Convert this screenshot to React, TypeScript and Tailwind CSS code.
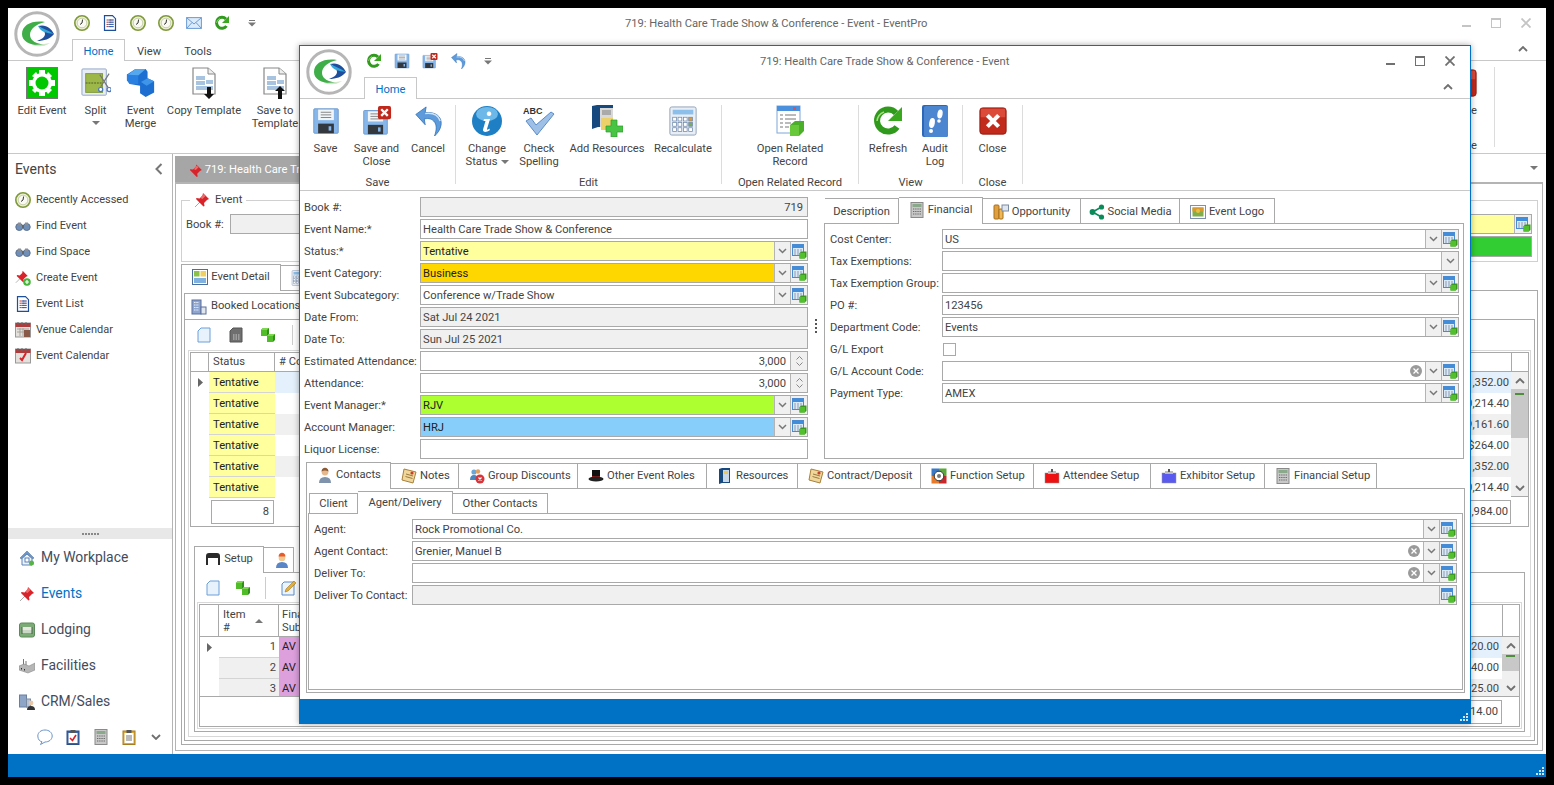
import type { ReactNode } from 'react'

type P = { s?: number }

function Logo({ s = 46 }: P) {
  return (
    <svg width={s} height={s} viewBox="0 0 46 46">
      <circle cx="23" cy="23" r="21.200" fill="#fff" stroke="#b6b6b6" strokeWidth="3" />
      <path d="M31 11C18 9 8 14 8 23c0 8 10 13 24 11-9-1-16-4-16-10 0-6 6-11 15-13z" fill="#3fae49" />
      <path d="M18 34c6 2 12 2 18-2-6 1-12 2-18 2z" fill="#cfe6c8" />
      <path d="M24 15c8-2 13 2 16 8-4 5-10 7-17 7 5-2 8-4 8-7 0-3-3-6-7-8z" fill="#1f4e9c" />
      <path d="M24 15c4 2 9 4 16 8-8-1-13-2-16-8z" fill="#35a6d8" />
    </svg>
  )
}
function Clock({ s = 16 }: P) {
  return (
    <svg width={s} height={s} viewBox="0 0 16 16">
      <circle cx="8" cy="8" r="7.200" fill="#eef0d8" stroke="#7f9a3a" strokeWidth="1.600" />
      <circle cx="8" cy="8" r="4.800" fill="#fafaf2" stroke="#9aa870" strokeWidth=".5" />
      <path d="M8.600 4.500 8 8 6 9.500" fill="none" stroke="#333" strokeWidth="1" />
    </svg>
  )
}
function DocList({ s = 16 }: P) {
  return (
    <svg width={s} height={s} viewBox="0 0 16 16">
      <path d="M2.500.7h8l3 3v11.600h-11z" fill="#fff" stroke="#1d4f9c" strokeWidth="1.200" />
      <path d="M4.500 5h7M4.500 7.200h7M4.500 9.400h7M4.500 11.600h7" stroke="#c0392b" strokeWidth="1" strokeDasharray="2 1" />
      <path d="M6.500 5h5M6.500 7.200h5M6.500 9.400h5M6.500 11.600h5" stroke="#2a62b8" strokeWidth="1" />
    </svg>
  )
}
function Mail({ s = 16 }: P) {
  return (
    <svg width={s} height={s} viewBox="0 0 16 16">
      <rect x=".6" y="2.600" width="14.800" height="10.800" fill="#dcebfa" stroke="#6a9bd6" />
      <path d="M1 3l7 6 7-6M1 13l5-5.500M15 13l-5-5.500" fill="none" stroke="#6a9bd6" />
    </svg>
  )
}
function Refresh({ s = 16 }: P) {
  return (
    <svg width={s} height={s} viewBox="0 0 32 32">
      <path d="M25 22a11 11 0 1 1-1-14" fill="none" stroke="#2f9a1c" strokeWidth="6" />
      <path d="M30 2v14H16z" fill="#3aa81f" />
      <path d="M12 7a11 11 0 0 0-7 9" fill="none" stroke="#a6de7c" strokeWidth="1.500" />
    </svg>
  )
}
function FloppyBody({ gray }: { gray?: boolean }) {
  return (
    <>
      <path d="M2 3q0-1 1-1h26q1 0 1 1v26q0 1-1 1H3q-1 0-1-1z" fill={gray ? '#c8c8c8' : '#86b6ea'} stroke={gray ? '#9a9a9a' : '#6a96cc'} />
      <rect x="7" y="3" width="18" height="12" fill="#f2f5f8" />
      <path d="M10 6h12M10 9h12M10 12h12" stroke="#777" />
      <rect x="7" y="19" width="18" height="11" fill={gray ? '#8c8c8c' : '#33383f'} />
      <rect x="19" y="22" width="3" height="5" fill={gray ? '#ddd' : '#86b6ea'} />
    </>
  )
}
function Floppy({ s = 16, gray }: P & { gray?: boolean }) {
  return <svg width={s} height={s} viewBox="0 0 32 32"><FloppyBody gray={gray} /></svg>
}
function FloppyX({ s = 16 }: P) {
  return (
    <svg width={s} height={s} viewBox="0 0 32 32">
      <g transform="translate(0 3) scale(.9)"><FloppyBody /></g>
      <rect x="17" y="0" width="14" height="14" rx="2" fill="#c0281b" />
      <path d="M20.500 3.500l7 7M27.500 3.500l-7 7" stroke="#fff" strokeWidth="2.500" />
    </svg>
  )
}
function Undo({ s = 16 }: P) {
  return (
    <svg width={s} height={s} viewBox="0 0 32 32">
      <path d="M3 9 14 1l-1 6C24 6 31 11 30 20c-1 6-4 9-7 12 2-6 3-12-1-16-3-3-7-3-10-2l1 6z" fill="#5d9bdc" stroke="#2b6cb3" strokeWidth=".8" />
      <path d="M13 8c8-1 14 2 16 8" fill="none" stroke="#cfe2f6" strokeWidth="1.500" />
    </svg>
  )
}
function Info({ s = 32 }: P) {
  return (
    <svg width={s} height={s} viewBox="0 0 32 32">
      <circle cx="16" cy="16" r="15" fill="#1e7fc4" />
      <ellipse cx="16" cy="9" rx="11" ry="7" fill="#6cb8e8" />
      <path d="M18 6.500a2.300 2.300 0 1 0 .1 0zM13 14h6l-3 10c0 1 1 1 3-.5l-.5 2c-3 2-7 2-6.500-1l2.500-8.500h-2z" fill="#fff" />
    </svg>
  )
}
function CheckAbc({ s = 32 }: P) {
  return (
    <svg width={s} height={s} viewBox="0 0 32 32">
      <text x="0" y="9" fontSize="9" fontWeight="700" fontFamily="Liberation Sans" fill="#333">ABC</text>
      <path d="M3 16l5-3 5 7L28 7l3 2-17 21z" fill="#9ec0e6" stroke="#5a8cc8" />
    </svg>
  )
}
function Cabinet({ s = 32 }: P) {
  return (
    <svg width={s} height={s} viewBox="0 0 32 32">
      <path d="M1 1l5-1h16v22H7l-6 2z" fill="#17497f" />
      <rect x="9" y="3" width="13" height="19" fill="#d8d8d8" />
      <rect x="11" y="5" width="9" height="5" fill="#aaa" />
      <path d="M10 13h12v12H10z" fill="#ecd06a" />
      <path d="M20 15h6v6h6v6h-6v5h-6v-5h-5v-6h5z" fill="#48c444" stroke="#2d9b2d" strokeWidth=".7" />
    </svg>
  )
}
function Calc({ s = 32 }: P) {
  return (
    <svg width={s} height={s} viewBox="0 0 32 32">
      <rect x="2" y="1" width="28" height="30" rx="2" fill="#e8eef6" stroke="#8f9fb5" />
      <rect x="5" y="4" width="22" height="5" fill="#8cc0ea" />
      {[0, 1, 2, 3].map(c => [0, 1, 2].map(r => (
        <rect key={`${c}${r}`} x={5 + c * 5.7} y={12 + r * 5.6} width="4" height="4" fill={c === 3 && r === 0 ? '#e09a38' : c === 3 && r === 1 ? '#78b050' : '#fff'} stroke="#6f88ac" strokeWidth=".8" />
      )))}
    </svg>
  )
}
function GrayCalc({ s = 16 }: P) {
  return (
    <svg width={s} height={s} viewBox="0 0 16 16">
      <rect x="2" y=".5" width="12" height="15" fill="#c8c8c8" stroke="#8a8a8a" />
      <rect x="3.500" y="2" width="9" height="3" fill="#8aa88a" />
      <path d="M4 7h8M4 9.500h8M4 12h8" stroke="#666" strokeWidth="1.200" strokeDasharray="1.300 .9" />
    </svg>
  )
}
function Related({ s = 32 }: P) {
  return (
    <svg width={s} height={s} viewBox="0 0 32 32">
      <rect x="3" y="1" width="23" height="27" fill="#fff" stroke="#7fa8d8" />
      <rect x="3" y="1" width="23" height="5" fill="#4a90dc" />
      <rect x="19" y="2" width="3" height="3" fill="#e05050" />
      <path d="M6 10h3M11 10h11M6 14h3M11 14h11M6 18h3M11 18h6M6 22h3M11 22h4" stroke="#777" />
      <path d="M16 20l5-4h9v10l-5 5h-9z" fill="#4caf2a" />
      <path d="M16 20h9v11h-9z" fill="#67c83a" />
    </svg>
  )
}
function AddBtn() {
  return (
    <svg width="15" height="15" viewBox="0 0 15 15">
      <rect x=".5" y=".5" width="11" height="11" fill="#dbe8f6" stroke="#4a8ad0" />
      <rect x="1" y="1" width="10" height="3" fill="#3f8ede" />
      <path d="M2 6h8M2 8h8M2 10h8" stroke="#8a9ab0" strokeDasharray="2 1" />
      <path d="M7.500 9l2-1.500H14.500V13l-2 1.500H7.500z" fill="#3a9a1e" />
      <rect x="7.500" y="9" width="5.500" height="5.500" fill="#52c02c" />
    </svg>
  )
}
function DetailIco({ s = 16 }: P) {
  return (
    <svg width={s} height={s} viewBox="0 0 16 16">
      <rect x=".5" y=".5" width="15" height="15" fill="#fff" stroke="#4a6f9c" />
      <rect x="2" y="2" width="5.500" height="5.500" fill="#8ac24a" />
      <rect x="8.500" y="2" width="5.500" height="5.500" fill="#f0d060" />
      <rect x="2" y="9" width="12" height="5" fill="#7fb2e0" />
    </svg>
  )
}
function Audit({ s = 32 }: P) {
  return (
    <svg width={s} height={s} viewBox="0 0 32 32">
      <rect x="3" y="0" width="26" height="32" rx="2" fill="#2d68b8" />
      <rect x="5" y="1" width="24" height="31" rx="2" fill="#4c86d0" />
      <ellipse cx="13" cy="18" rx="2.800" ry="5" fill="#fff" transform="rotate(10 13 18)" />
      <circle cx="12" cy="26" r="2" fill="#fff" />
      <ellipse cx="21" cy="9" rx="2.600" ry="4.500" fill="#fff" transform="rotate(10 21 9)" />
      <circle cx="20" cy="16" r="1.800" fill="#fff" />
    </svg>
  )
}
function RedX({ s = 32 }: P) {
  return (
    <svg width={s} height={s} viewBox="0 0 32 32">
      <rect x="2" y="2" width="28" height="28" rx="3" fill="#c22a1c" stroke="#8e1a10" />
      <path d="M3 4q0-1 1-1h24q1 0 1 1v8H3z" fill="#dc4a3a" />
      <path d="M10 10l12 12M22 10 10 22" stroke="#fff" strokeWidth="4.500" />
    </svg>
  )
}
function GearGreen({ s = 32 }: P) {
  return (
    <svg width={s} height={s} viewBox="0 0 32 32">
      <rect x=".5" y=".5" width="31" height="31" fill="#00c800" stroke="#777" />
      <circle cx="16" cy="16" r="10" fill="#fff" />
      <path d="M13 3h6v5h-6zM13 24h6v5h-6zM3 13h5v6H3zM24 13h5v6h-5zM6 9l4-4 3 4-3 3zM22 5l4 4-3 3-3-3zM6 23l3-3 3 3-3 3zM23 20l3 3-4 4-3-4z" fill="#fff" />
      <circle cx="16" cy="16" r="6.500" fill="#00c800" />
    </svg>
  )
}
function Split({ s = 32 }: P) {
  return (
    <svg width={s} height={s} viewBox="0 0 32 32">
      <rect x="1" y="1" width="26" height="28" rx="1" fill="#e8edf5" stroke="#8da3c4" />
      <rect x="5" y="6" width="18" height="20" fill="#9db849" stroke="#7f9a35" />
      <path d="M5 16h18" stroke="#4c5a20" strokeDasharray="2 1" />
      <path d="M20 7l9 14M30 6l-9 14" stroke="#777" strokeWidth="1.300" />
      <circle cx="30" cy="23" r="2.200" fill="#fff" stroke="#4a78c0" strokeWidth="1.300" />
      <circle cx="21" cy="23" r="2.200" fill="#fff" stroke="#4a78c0" strokeWidth="1.300" />
    </svg>
  )
}
function Merge({ s = 32 }: P) {
  return (
    <svg width={s} height={s} viewBox="0 0 32 32">
      <path d="M10 1h11l2 3v7l7 3v12l-9 5-6-4v-8L4 17l-3-4V7z" fill="#1c6fd0" />
      <path d="M10 1h11l-8 7H1z" fill="#55a8ee" />
      <path d="M13 8v9l-9 0-3-4V7z" fill="#2a80e0" />
      <path d="M23 11l7 3-8 5-6-4z" fill="#3f95e8" />
    </svg>
  )
}
function Template({ s = 32, up }: P & { up?: boolean }) {
  return (
    <svg width={s} height={s} viewBox="0 0 32 32">
      <path d="M5 1h15l7 6v20H5z" fill="#fff" stroke="#888" strokeWidth="1.200" />
      <path d="M20 1v6h7" fill="#eee" stroke="#888" />
      <path d="M8 9h9v4H8zM18 13h7v4h-7zM8 14h9v4H8zM8 19h17v4H8z" fill="#a8c3e0" />
      {up ? <path d="M19 32v-8h-3l5-5 5 5h-3v8z" fill="#111" /> : <path d="M19 20v7h-3l5 5 5-5h-3v-7z" fill="#111" />}
    </svg>
  )
}
function Pin({ s = 16 }: P) {
  return (
    <svg width={s} height={s} viewBox="0 0 16 16">
      <path d="M1 15l5-5" stroke="#aaa" strokeWidth="1" />
      <path d="M9 1l6 6-2 1-3 3 .5 3-1 .5-7.500-7.500.5-1 3 .5 3-3z" fill="#d8232a" />
      <path d="M9.500 2l2 2-3 3-2-1z" fill="#ef6a6a" />
    </svg>
  )
}
function PinAdd({ s = 16 }: P) {
  return (
    <svg width={s} height={s} viewBox="0 0 16 16">
      <g transform="scale(.85)"><path d="M1 15l5-5" stroke="#aaa" /><path d="M9 1l6 6-2 1-3 3 .5 3-1 .5-7.500-7.500.5-1 3 .5 3-3z" fill="#d8232a" /></g>
      <circle cx="12" cy="12" r="3.800" fill="#46b63a" />
      <path d="M12 10v4M10 12h4" stroke="#fff" strokeWidth="1.200" />
    </svg>
  )
}
function Binoc({ s = 16 }: P) {
  return (
    <svg width={s} height={s} viewBox="0 0 16 16">
      <circle cx="4.300" cy="9" r="3.500" fill="#6f8fb8" stroke="#5a6f8c" />
      <circle cx="11.700" cy="9" r="3.500" fill="#6f8fb8" stroke="#5a6f8c" />
      <rect x="3" y="4.500" width="3" height="3" fill="#8a8f98" />
      <rect x="10" y="4.500" width="3" height="3" fill="#8a8f98" />
      <rect x="7" y="7" width="2" height="3" fill="#666" />
    </svg>
  )
}
function Cal({ s = 16, check }: P & { check?: boolean }) {
  return (
    <svg width={s} height={s} viewBox="0 0 16 16">
      <rect x=".5" y="1" width="15" height="14" fill="#e4e0dc" stroke="#999" />
      <rect x=".5" y="1" width="15" height="4" fill="#b23a3a" />
      <path d="M3 0v3M7 0v3M11 0v3" stroke="#666" />
      {check ? <path d="M5 10l2 2 4-7" fill="none" stroke="#d8232a" strokeWidth="2" /> : <path d="M2 7h12M2 10h12M5 6v8M8 6v8" stroke="#a8a39c" />}
      {!check && <rect x="9" y="8" width="6" height="7" fill="#8a5a48" />}
    </svg>
  )
}
function House({ s = 16 }: P) {
  return (
    <svg width={s} height={s} viewBox="0 0 16 16">
      <path d="M1 8l7-7 7 7-1.500 1L8 3.500 2.500 9z" fill="#6f96c8" stroke="#40689c" strokeWidth=".5" />
      <path d="M3 8.500 8 4l5 4.500V15H3z" fill="#eef3fa" stroke="#5c84b8" />
      <rect x="6" y="8" width="4" height="4" fill="#fff" stroke="#5c84b8" />
      <circle cx="12.500" cy="13" r="2.500" fill="#57b345" />
    </svg>
  )
}
function Bed({ s = 16 }: P) {
  return (
    <svg width={s} height={s} viewBox="0 0 16 16">
      <rect x=".5" y="1" width="15" height="14" rx="2" fill="#7cab78" stroke="#5c8a58" />
      <rect x="3" y="5" width="10" height="3" fill="#e8e8e0" />
      <rect x="3" y="8" width="10" height="3" fill="#c8d8c4" />
      <path d="M3 5v7M13 5v7" stroke="#4a5f48" />
    </svg>
  )
}
function Factory({ s = 16 }: P) {
  return (
    <svg width={s} height={s} viewBox="0 0 16 16">
      <path d="M4 1h1v6H4zM6.500 3h1v4h-1z" fill="#777" />
      <path d="M0 8l5-2 5 2 6-3v7l-7 3-9-3z" fill="#b6b6b6" stroke="#7c7c7c" strokeWidth=".5" />
      <path d="M2 10h1v1.500H2zM5 11h1v1.500H5z" fill="#333" />
    </svg>
  )
}
function Crm({ s = 16 }: P) {
  return (
    <svg width={s} height={s} viewBox="0 0 16 16">
      <rect x=".5" y="1" width="7" height="12" fill="#8ea5c8" stroke="#6a7f9e" />
      <rect x="7.500" y="5" width="4" height="8" fill="#b4c2d8" stroke="#7a8aa0" />
      <circle cx="12" cy="9" r="2.400" fill="#e8c8a8" />
      <path d="M8 16q0-4 4-4t4 4z" fill="#333" />
    </svg>
  )
}
function Bubble({ s = 16 }: P) {
  return (
    <svg width={s} height={s} viewBox="0 0 16 16">
      <path d="M8 1C4 1 .8 3.500.8 7S3 12.500 5 12.800L3.500 15.500 8 13c4 0 7.200-2.500 7.200-6S12 1 8 1z" fill="#fff" stroke="#6a94c8" />
    </svg>
  )
}
function Clip({ s = 16, check }: P & { check?: boolean }) {
  return (
    <svg width={s} height={s} viewBox="0 0 16 16">
      <rect x="2" y="2" width="12" height="13.500" fill={check ? '#3a66a8' : '#d8a838'} stroke={check ? '#2a4f88' : '#a87c20'} />
      <rect x="3.500" y="4" width="9" height="10" fill="#fff" />
      <rect x="5.500" y="1" width="5" height="3" fill="#555" />
      {check ? <path d="M5 9l2.500 2.500L11 6" fill="none" stroke="#d8232a" strokeWidth="1.600" /> : <path d="M5 7h6M5 9h6M5 11h6" stroke="#777" />}
    </svg>
  )
}
function Share({ s = 16 }: P) {
  return (
    <svg width={s} height={s} viewBox="0 0 16 16">
      <path d="M12.500 3 3.500 8l9 5" fill="none" stroke="#0b8a5a" strokeWidth="1.600" />
      <circle cx="12.500" cy="3" r="2.600" fill="#0b8a5a" />
      <circle cx="3.500" cy="8" r="2.900" fill="#0b8a5a" />
      <circle cx="12.500" cy="13" r="2.600" fill="#0b8a5a" />
    </svg>
  )
}
function Photo({ s = 16 }: P) {
  return (
    <svg width={s} height={s} viewBox="0 0 16 16">
      <rect x=".5" y="1.500" width="15" height="13" fill="#fff" stroke="#7f8fb0" />
      <rect x="2.500" y="3.500" width="11" height="9" fill="#7fae4a" />
      <rect x="2.500" y="3.500" width="11" height="4" fill="#d89a30" />
      <circle cx="8" cy="7" r="2" fill="#e8c040" />
    </svg>
  )
}
function Coins({ s = 16 }: P) {
  return (
    <svg width={s} height={s} viewBox="0 0 16 16">
      <rect x="1" y="1" width="5" height="14" rx="1" fill="#e0a040" stroke="#a86f18" />
      <rect x="6" y="5" width="4" height="10" rx="1" fill="#eeb858" stroke="#a86f18" />
      <rect x="9" y="1" width="6.500" height="6" fill="#dfe6f0" stroke="#7a8aa0" />
    </svg>
  )
}
function Person({ s = 16 }: P) {
  return (
    <svg width={s} height={s} viewBox="0 0 16 16">
      <path d="M2 16q0-6 6-6t6 6z" fill="#7f93ad" />
      <circle cx="8" cy="5" r="3.400" fill="#e6b88e" />
      <path d="M4.500 4.500Q5 .8 8 .8t3.500 3.700Q8 2.500 4.500 4.500z" fill="#8b5a34" />
    </svg>
  )
}
function Worker({ s = 16 }: P) {
  return (
    <svg width={s} height={s} viewBox="0 0 16 16">
      <path d="M2 16q0-6 6-6t6 6z" fill="#5a86c8" />
      <circle cx="8" cy="6" r="3.300" fill="#f0c890" />
      <path d="M4.500 4.500Q5 .8 8 .8t3.500 3.700z" fill="#e85a2a" />
    </svg>
  )
}
function Notes({ s = 16 }: P) {
  return (
    <svg width={s} height={s} viewBox="0 0 16 16">
      <path d="M3 1l12 3-3 11-11-3z" fill="#efd69a" stroke="#a8803a" />
      <path d="M5 6l7 2M4.500 8.500l7 2" stroke="#9a7a40" />
      <circle cx="11" cy="5" r="1.600" fill="#c8402a" />
    </svg>
  )
}
function Group({ s = 16 }: P) {
  return (
    <svg width={s} height={s} viewBox="0 0 16 16">
      <circle cx="5" cy="4" r="2.600" fill="#6aa6d8" />
      <path d="M1 12q0-5 4-5t4 5z" fill="#4a86c0" />
      <circle cx="9" cy="3.500" r="2.200" fill="#e0a060" />
      <circle cx="11" cy="11" r="4.500" fill="#d8343a" />
      <path d="M9.500 9.500l3 3M12.500 9.500l-3 3" stroke="#fff" strokeWidth="1.200" />
    </svg>
  )
}
function Hat({ s = 16 }: P) {
  return (
    <svg width={s} height={s} viewBox="0 0 16 16">
      <rect x="4" y="2" width="8" height="8" fill="#111" />
      <rect x="4" y="8" width="8" height="2" fill="#a01818" />
      <ellipse cx="8" cy="11" rx="7.500" ry="2.500" fill="#222" />
    </svg>
  )
}
function Res({ s = 16 }: P) {
  return (
    <svg width={s} height={s} viewBox="0 0 16 16">
      <path d="M2 1l3-1h8v15H5l-3 1z" fill="#17497f" />
      <rect x="6" y="2" width="6" height="12" fill="#c8d8e8" />
      <rect x="7" y="3" width="4" height="3" fill="#e8c860" />
    </svg>
  )
}
function Func({ s = 16 }: P) {
  return (
    <svg width={s} height={s} viewBox="0 0 16 16">
      <rect x=".5" y=".5" width="7.500" height="7.500" fill="#3a78c8" />
      <rect x="8" y=".5" width="7.500" height="7.500" fill="#5aa83a" />
      <rect x=".5" y="8" width="7.500" height="7.500" fill="#e87a2a" />
      <rect x="8" y="8" width="7.500" height="7.500" fill="#c8282a" />
      <circle cx="8" cy="8" r="4.800" fill="#fff" stroke="#333" />
      <circle cx="8" cy="8" r="2" fill="#777" />
    </svg>
  )
}
function Badge({ s = 16, blue }: P & { blue?: boolean }) {
  return (
    <svg width={s} height={s} viewBox="0 0 16 16">
      <rect x="1" y="5" width="14" height="10" fill={blue ? '#5a5aee' : '#ee1111'} stroke="#999" strokeWidth=".5" />
      <rect x="4" y="3" width="8" height="3" fill="#bbb" />
      <rect x="7" y="1" width="2" height="3" fill="#555" />
    </svg>
  )
}
function Page({ s = 16 }: P) {
  return (
    <svg width={s} height={s} viewBox="0 0 16 16">
      <path d="M5 1h9v14H2V4z" fill="#e8f2fc" stroke="#6a9ed8" />
    </svg>
  )
}
function Sheet({ s = 16 }: P) {
  return (
    <svg width={s} height={s} viewBox="0 0 16 16">
      <path d="M5 1h9v14H2V4z" fill="#6f6f6f" stroke="#555" />
      <path d="M5 8h7M5 10h7M5 12h7" stroke="#ccc" strokeDasharray="1.500 1" />
    </svg>
  )
}
function Cube({ x, y }: { x: number; y: number }) {
  return (
    <g transform={`translate(${x} ${y})`}>
      <path d="M0 2l2-2h6v6l-2 2H0z" fill="#2f8f1a" />
      <path d="M0 2l2-2h6L6 2z" fill="#7ed84e" />
      <rect x="0" y="2" width="6" height="6" fill="#50bd28" />
    </g>
  )
}
function Cubes({ s = 16 }: P) {
  return (
    <svg width={s} height={s} viewBox="0 0 16 16">
      <Cube x={1} y={1} />
      <Cube x={7} y={7} />
    </svg>
  )
}
function EditDoc({ s = 16 }: P) {
  return (
    <svg width={s} height={s} viewBox="0 0 16 16">
      <path d="M4 2h10v13H2V4z" fill="#eef4fc" stroke="#5a8cc8" />
      <path d="M14 1l2 2-8 8-3 1 1-3z" fill="#e8b030" stroke="#8a6a20" strokeWidth=".5" />
    </svg>
  )
}
function Building({ s = 16 }: P) {
  return (
    <svg width={s} height={s} viewBox="0 0 16 16">
      <rect x="1" y="1" width="9" height="14" fill="#8ea5d0" stroke="#5a6f9a" />
      <path d="M3 3.500h5M3 6h5M3 8.500h5M3 11h5" stroke="#e8eef8" strokeDasharray="1.500 .8" />
      <rect x="10" y="8" width="5" height="7" fill="#dfe6f0" stroke="#5a6f9a" />
    </svg>
  )
}
// black table glyph on the Setup tab
function SetupIco() {
  return (
    <svg width="16" height="16" viewBox="0 0 16 16">
      <path d="M1 14V5q0-3 3-3h8q3 0 3 3v9h-2V7H3v7z" fill="#2a2a2a" />
    </svg>
  )
}
function Chev() {
  return (
    <svg width="9" height="6" viewBox="0 0 9 6"><path d="M1 1l3.500 3.500L8 1" fill="none" stroke="#777" strokeWidth="1.500" /></svg>
  )
}
function ChevUp({ c = '#6f6f6f' }: { c?: string }) {
  return (
    <svg width="10" height="6" viewBox="0 0 10 6"><path d="M1 5l4-4 4 4" fill="none" stroke={c} strokeWidth="1.800" /></svg>
  )
}
function ChevDn({ c = '#6f6f6f' }: { c?: string }) {
  return (
    <svg width="10" height="6" viewBox="0 0 10 6"><path d="M1 1l4 4 4-4" fill="none" stroke={c} strokeWidth="1.800" /></svg>
  )
}
function Caret() {
  return <svg width="8" height="5" viewBox="0 0 8 5"><path d="M0 0h8L4 4z" fill="#777" /></svg>
}
function QatDrop() {
  return (
    <svg width="8" height="7" viewBox="0 0 8 7"><path d="M1 .5h6" stroke="#777" /><path d="M0 2.500h8L4 6.500z" fill="#777" /></svg>
  )
}
function ClearX() {
  return (
    <svg width="12" height="12" viewBox="0 0 12 12">
      <circle cx="6" cy="6" r="6" fill="#9a9a9a" />
      <path d="M3.500 3.500l5 5M8.500 3.500l-5 5" stroke="#fff" strokeWidth="1.300" />
    </svg>
  )
}
function Grip() {
  return (
    <svg width="9" height="9" viewBox="0 0 9 9" fill="#cfe3f5">
      <rect x="6" y="0" width="2" height="2" /><rect x="3" y="3" width="2" height="2" /><rect x="6" y="3" width="2" height="2" /><rect x="0" y="6" width="2" height="2" /><rect x="3" y="6" width="2" height="2" /><rect x="6" y="6" width="2" height="2" />
    </svg>
  )
}
function WinBtns({ faded }: { faded?: boolean }) {
  const c = faded ? '#c4c4c4' : '#707070'
  return (
    <div className="ml-auto flex h-full items-center pr-[5px]">
      <div className="flex w-[30px] justify-center pt-[4px]"><svg width="9" height="3"><rect width="9" height="2" y="1" fill={c} /></svg></div>
      <div className="flex w-[30px] justify-center"><svg width="10" height="10"><rect x=".5" y=".5" width="9" height="9" fill="none" stroke={c} /><rect width="10" height="2" fill={c} /></svg></div>
      <div className="flex w-[30px] justify-center"><svg width="10" height="10"><path d="M.5.5l9 9M9.500.5l-9 9" stroke={c} strokeWidth="1.800" /></svg></div>
    </div>
  )
}

// ribbon button, icon over one or two lines of text
function RB({ w, icon, lines, arrow }: { w: string; icon: ReactNode; lines: string[]; arrow?: boolean }) {
  return (
    <div className={`flex shrink-0 flex-col items-center pt-[6px] ${w}`}>
      <div className="flex h-[32px] items-center justify-center">{icon}</div>
      <div className="mt-[5px] text-center leading-[13px] text-[#444]">
        {lines.map((l, i) => (
          <div key={l} className="whitespace-nowrap">{l}{arrow && i === lines.length - 1 && lines.length > 1 && <span className="ml-[3px] inline-block align-middle"><Caret /></span>}</div>
        ))}
        {arrow && lines.length === 1 && <div className="flex justify-center pt-[4px]"><Caret /></div>}
      </div>
    </div>
  )
}
function RGroup({ w, label, pl, children }: { w: string; label: string; pl?: string; children: ReactNode }) {
  return (
    <div className={`flex shrink-0 flex-col ${w}`}>
      <div className={`flex flex-1 ${pl ?? ''}`}>{children}</div>
      <div className="pb-px text-center leading-[13px] text-[#444]">{label}</div>
    </div>
  )
}
function Sep() {
  return <div className="my-[6px] w-px shrink-0 bg-[#dcdcdc]" />
}
function Tab({ w, icon, label, on, center }: { w: string; icon?: ReactNode; label?: string; on?: boolean; center?: boolean }) {
  return (
    <div className={`flex shrink-0 items-center gap-[3px] border border-b-0 border-[#a9a9a9] bg-white text-[#444] ${w} ${on ? 'relative z-10 -mb-px h-[27px] pb-[2px]' : 'h-[25px] border-l-0'} ${center ? 'justify-center' : 'pl-[10px]'}`}>
      {icon}
      {label && <span className="whitespace-nowrap">{label}</span>}
    </div>
  )
}

function Btn({ w, children }: { w: string; children: ReactNode }) {
  return <div className={`flex shrink-0 items-center justify-center border-l border-[#b4b4b4] bg-[#f0f0f0] ${w}`}>{children}</div>
}
// input box with optional clear, drop-down and add buttons
function Combo({ value, bg = 'bg-white', text = 'text-[#444]', drop, add, clear, right, spin, dropW = 'w-[16px]' }: {
  value?: string; bg?: string; text?: string; drop?: boolean; add?: boolean; clear?: boolean; right?: boolean; spin?: boolean; dropW?: string
}) {
  return (
    <div className={`flex h-[20px] min-w-0 flex-1 border border-[#a9a9a9] leading-[18px] ${bg}`}>
      <div className={`flex min-w-0 flex-1 items-center whitespace-nowrap pl-[2px] pt-[2px] ${text} ${right ? 'justify-end pr-[4px]' : ''}`}>{value}</div>
      {clear && <div className="flex items-center pr-[3px]"><ClearX /></div>}
      {drop && <Btn w={dropW}><Chev /></Btn>}
      {add && <Btn w="w-[17px]"><AddBtn /></Btn>}
      {spin && (
        <div className="flex w-[17px] flex-col items-center justify-center gap-[2px] border-l border-[#b4b4b4] bg-[#f0f0f0]">
          <svg width="7" height="4"><path d="M.5 3.500l3-3 3 3" fill="none" stroke="#888" /></svg>
          <svg width="7" height="4"><path d="M.5.5l3 3 3-3" fill="none" stroke="#888" /></svg>
        </div>
      )}
    </div>
  )
}
function Row({ label, w, children }: { label: string; w: string; children: ReactNode }) {
  return (
    <div className="flex h-[22px] items-center">
      <div className={`shrink-0 whitespace-nowrap pt-[2px] text-[#444] ${w}`}>{label}</div>
      {children}
    </div>
  )
}

function Scroll({ thumb }: { thumb: string }) {
  return (
    <div className="flex w-[17px] shrink-0 flex-col bg-[#f0f0f0]">
      <div className="flex h-[17px] shrink-0 items-center justify-center"><ChevUp /></div>
      <div className={`flex justify-center bg-[#c8c8c8] ${thumb}`}><div className="h-[2px] w-[9px] bg-[#4d8f3a]" /></div>
      <div className="flex-1" />
      <div className="flex h-[17px] shrink-0 items-center justify-center"><ChevDn /></div>
    </div>
  )
}

const leftNav: [ReactNode, string][] = [
  [<Clock />, 'Recently Accessed'],
  [<Binoc />, 'Find Event'],
  [<Binoc />, 'Find Space'],
  [<PinAdd />, 'Create Event'],
  [<DocList />, 'Event List'],
  [<Cal />, 'Venue Calendar'],
  [<Cal check />, 'Event Calendar'],
]
const bigNav: [ReactNode, string, boolean][] = [
  [<House />, 'My Workplace', false],
  [<Pin />, 'Events', true],
  [<Bed />, 'Lodging', false],
  [<Factory />, 'Facilities', false],
  [<Crm />, 'CRM/Sales', false],
]
const grid1Rows = ['$11,352.00', '$10,214.40', '$9,161.60', '$264.00', '$11,352.00', '$10,214.40']
const rowBg = ['bg-[#e4f0fb]', 'bg-white', 'bg-[#f0f0f0]', 'bg-white', 'bg-[#f0f0f0]', 'bg-white']

const bottomTabs: [string, ReactNode, string][] = [
  ['w-[68px]', <Notes />, 'Notes'],
  ['w-[119px]', <Group />, 'Group Discounts'],
  ['w-[129px]', <Hat />, 'Other Event Roles'],
  ['w-[91px]', <Res />, 'Resources'],
  ['w-[123px]', <Notes />, 'Contract/Deposit'],
  ['w-[113px]', <Func />, 'Function Setup'],
  ['w-[117px]', <Badge />, 'Attendee Setup'],
  ['w-[114px]', <Badge blue />, 'Exhibitor Setup'],
  ['w-[112px]', <GrayCalc />, 'Financial Setup'],
]

function EventWindow() {
  return (
    <div className="absolute left-[299px] top-[45px] z-20 flex h-[679px] w-[1172px] flex-col border border-[#0072c6] bg-white shadow-[0_0_6px_rgba(0,0,0,0.35)]">
      {/* header */}
      <div className="flex h-[53px] shrink-0 border-b border-[#c8c8c8]">
        <div className="w-[64px] shrink-0 pl-[6px] pt-[3px]"><Logo /></div>
        <div className="flex min-w-0 flex-1 flex-col">
          <div className="flex h-[31px] items-center pl-[2px]">
            <div className="flex items-center gap-[12px]">
              <Refresh /><Floppy /><FloppyX /><Undo />
            </div>
            <div className="ml-[18px]"><QatDrop /></div>
            <div className="ml-[268px] mt-[2px] whitespace-nowrap text-[#666]">719: Health Care Trade Show &amp; Conference - Event</div>
            <WinBtns />
          </div>
          <div className="flex h-[22px] items-end">
            <div className="relative z-10 -mb-px flex h-[22px] w-[53px] items-center justify-center border border-b-0 border-[#c8c8c8] bg-white pt-[4px] text-[#0072c6]">Home</div>
            <div className="ml-auto flex h-full items-center pr-[17px]"><ChevUp /></div>
          </div>
        </div>
      </div>
      {/* ribbon */}
      <div className="flex h-[92px] shrink-0 border-b border-[#c8c8c8]">
        <RGroup w="w-[155px]" label="Save" pl="pl-px">
          <RB w="w-[49px]" icon={<Floppy s={28} />} lines={['Save']} />
          <RB w="w-[53px]" icon={<FloppyX s={30} />} lines={['Save and', 'Close']} />
          <RB w="w-[50px]" icon={<Undo s={30} />} lines={['Cancel']} />
        </RGroup>
        <Sep />
        <RGroup w="w-[265px]" label="Edit" pl="pl-[5px]">
          <RB w="w-[52px]" icon={<Info />} lines={['Change', 'Status']} arrow />
          <RB w="w-[52px]" icon={<CheckAbc />} lines={['Check', 'Spelling']} />
          <RB w="w-[84px]" icon={<Cabinet />} lines={['Add Resources']} />
          <RB w="w-[68px]" icon={<Calc s={30} />} lines={['Recalculate']} />
        </RGroup>
        <Sep />
        <RGroup w="w-[136px]" label="Open Related Record">
          <RB w="w-[136px]" icon={<Related />} lines={['Open Related', 'Record']} />
        </RGroup>
        <Sep />
        <RGroup w="w-[103px]" label="View" pl="pl-[5px]">
          <RB w="w-[48px]" icon={<Refresh s={32} />} lines={['Refresh']} />
          <RB w="w-[46px]" icon={<Audit />} lines={['Audit', 'Log']} />
        </RGroup>
        <Sep />
        <RGroup w="w-[59px]" label="Close">
          <RB w="w-[59px]" icon={<RedX s={30} />} lines={['Close']} />
        </RGroup>
        <Sep />
      </div>
      {/* top form */}
      <div className="flex h-[271px] shrink-0">
        <div className="w-[508px] shrink-0 pl-[4px] pt-[5px]">
          <Row label="Book #:" w="w-[116px]"><Combo value="719" bg="bg-[#f0f0f0]" right /></Row>
          <Row label="Event Name:*" w="w-[116px]"><Combo value="Health Care Trade Show & Conference" /></Row>
          <Row label="Status:*" w="w-[116px]"><Combo value="Tentative" bg="bg-[#ffff9e]" text="text-[#222]" drop add /></Row>
          <Row label="Event Category:" w="w-[116px]"><Combo value="Business" bg="bg-[#ffd700]" text="text-[#222]" drop add /></Row>
          <Row label="Event Subcategory:" w="w-[116px]"><Combo value="Conference w/Trade Show" drop add /></Row>
          <Row label="Date From:" w="w-[116px]"><Combo value="Sat Jul 24 2021" bg="bg-[#f0f0f0]" /></Row>
          <Row label="Date To:" w="w-[116px]"><Combo value="Sun Jul 25 2021" bg="bg-[#f0f0f0]" /></Row>
          <Row label="Estimated Attendance:" w="w-[116px]"><Combo value="3,000" right spin /></Row>
          <Row label="Attendance:" w="w-[116px]"><Combo value="3,000" right spin /></Row>
          <Row label="Event Manager:*" w="w-[116px]"><Combo value="RJV" bg="bg-[#adff2f]" text="text-[#222]" drop add /></Row>
          <Row label="Account Manager:" w="w-[116px]"><Combo value="HRJ" bg="bg-[#87cefa]" text="text-[#222]" drop add /></Row>
          <Row label="Liquor License:" w="w-[116px]"><Combo /></Row>
        </div>
        <div className="flex w-[16px] shrink-0 flex-col items-center gap-[2px] pt-[128px]">
          <div className="h-[2px] w-[2px] bg-[#555]" /><div className="h-[2px] w-[2px] bg-[#555]" /><div className="h-[2px] w-[2px] bg-[#555]" /><div className="h-[2px] w-[2px] bg-[#555]" />
        </div>
        <div className="flex w-[640px] shrink-0 flex-col pt-[6px]">
          <div className="flex h-[26px] items-end pl-px">
            <Tab w="w-[74px] border-l pt-[2px]" label="Description" center />
            <Tab w="w-[84px] border-l-0" icon={<GrayCalc />} label="Financial" on center />
            <Tab w="w-[98px] pt-[2px]" icon={<Coins />} label="Opportunity" center />
            <Tab w="w-[99px] pt-[2px]" icon={<Share />} label="Social Media" center />
            <Tab w="w-[95px] pt-[2px]" icon={<Photo />} label="Event Logo" center />
          </div>
          <div className="h-[236px] border border-[#a9a9a9] pl-[5px] pr-[4px] pt-[4px]">
            <Row label="Cost Center:" w="w-[112px]"><Combo value="US" drop add /></Row>
            <Row label="Tax Exemptions:" w="w-[112px]"><Combo drop dropW="w-[17px]" /></Row>
            <Row label="Tax Exemption Group:" w="w-[112px]"><Combo drop add /></Row>
            <Row label="PO #:" w="w-[112px]"><Combo value="123456" /></Row>
            <Row label="Department Code:" w="w-[112px]"><Combo value="Events" drop add /></Row>
            <Row label="G/L Export" w="w-[112px]"><div className="ml-px h-[13px] w-[13px] border border-[#a9a9a9] bg-white" /></Row>
            <Row label="G/L Account Code:" w="w-[112px]"><Combo clear drop add /></Row>
            <Row label="Payment Type:" w="w-[112px]"><Combo value="AMEX" drop add /></Row>
          </div>
        </div>
      </div>
      {/* lower tabs */}
      <div className="flex h-[26px] shrink-0 items-end pl-[6px]">
        <Tab w="w-[85px]" icon={<Person />} label="Contacts" on />
        {bottomTabs.map(([w, icon, label]) => (
          <Tab key={label} w={w} icon={icon} label={label} />
        ))}
      </div>
      <div className="ml-[6px] mr-[5px] h-[205px] shrink-0 border border-[#a9a9a9] px-px pt-[4px]">
        <div className="flex h-[20px] items-end pl-px">
          <div className="flex h-[20px] w-[49px] shrink-0 items-center justify-center border border-b-0 border-[#a9a9a9] pt-[2px] text-[#444]">Client</div>
          <div className="relative z-10 -mb-px flex h-[23px] w-[95px] shrink-0 items-center justify-center border border-b-0 border-l-0 border-[#a9a9a9] bg-white pt-[1px] text-[#444]">Agent/Delivery</div>
          <div className="flex h-[20px] w-[95px] shrink-0 items-center justify-center border border-b-0 border-l-0 border-[#a9a9a9] pt-[2px] text-[#444]">Other Contacts</div>
        </div>
        <div className="h-[177px] border border-[#a9a9a9] pl-[5px] pr-[5px] pt-[4px]">
          <Row label="Agent:" w="w-[98px]"><Combo value="Rock Promotional Co." drop add /></Row>
          <Row label="Agent Contact:" w="w-[98px]"><Combo value="Grenier, Manuel B" clear drop add /></Row>
          <Row label="Deliver To:" w="w-[98px]"><Combo clear drop add /></Row>
          <Row label="Deliver To Contact:" w="w-[98px]"><Combo bg="bg-[#f0f0f0]" add /></Row>
        </div>
      </div>
      <div className="mt-auto flex h-[24px] shrink-0 items-end justify-end bg-[#0072c6] pb-px pr-[1px]"><Grip /></div>
    </div>
  )
}

function MainWindow() {
  return (
    <div className="flex h-[769px] w-[1538px] flex-col bg-white">
      {/* header */}
      <div className="flex h-[53px] shrink-0 border-b border-[#c8c8c8]">
        <div className="w-[64px] shrink-0 pl-[6px] pt-[3px]"><Logo /></div>
        <div className="flex min-w-0 flex-1 flex-col">
          <div className="flex h-[31px] items-center pl-[2px]">
            <div className="flex items-center gap-[12px]">
              <Clock /><DocList /><Clock /><Clock /><Mail /><Refresh />
            </div>
            <div className="ml-[18px]"><QatDrop /></div>
            <div className="ml-[369px] mt-[2px] whitespace-nowrap text-[#666]">719: Health Care Trade Show &amp; Conference - Event - EventPro</div>
            <WinBtns faded />
          </div>
          <div className="flex h-[22px] items-end">
            <div className="relative z-10 -mb-px flex h-[22px] w-[53px] items-center justify-center border border-b-0 border-[#c8c8c8] bg-white pt-[4px] text-[#0072c6]">Home</div>
            <div className="flex h-[21px] w-[48px] items-center justify-center pt-[5px] text-[#444]">View</div>
            <div className="flex h-[21px] w-[50px] items-center justify-center pt-[5px] text-[#444]">Tools</div>
            <div className="ml-auto flex h-full items-center pr-[18px]"><ChevUp /></div>
          </div>
        </div>
      </div>
      {/* ribbon */}
      <div className="flex h-[93px] shrink-0 border-b border-[#c8c8c8] pl-[6px]">
        <RB w="w-[56px]" icon={<GearGreen />} lines={['Edit Event']} />
        <RB w="w-[51px]" icon={<Split s={30} />} lines={['Split']} arrow />
        <RB w="w-[39px]" icon={<Merge s={30} />} lines={['Event', 'Merge']} />
        <RB w="w-[88px]" icon={<Template />} lines={['Copy Template']} />
        <RB w="w-[54px]" icon={<Template up />} lines={['Save to', 'Template']} />
        <div className="flex-1" />
        <div className="flex w-[36px] shrink-0 flex-col">
          <RB w="w-[36px]" icon={<RedX s={30} />} lines={['Close']} />
          <div className="mt-auto pb-[1px] text-center leading-[13px] text-[#444]">Close</div>
        </div>
        <div className="w-[13px] shrink-0" />
        <div className="my-[6px] w-px bg-[#dcdcdc]" />
        <div className="w-[51px] shrink-0" />
      </div>
      {/* body */}
      <div className="flex min-h-0 flex-1">
        <div className="flex w-[165px] shrink-0 flex-col border-r border-[#b4b4b4]">
          <div className="flex h-[30px] items-center justify-between pl-[7px] pr-[9px] text-[14px] text-[#444]">
            Events
            <svg width="8" height="12" viewBox="0 0 8 12"><path d="M6.500 1l-5 5 5 5" fill="none" stroke="#777" strokeWidth="2" /></svg>
          </div>
          <div className="h-[3px] shrink-0" />
          {leftNav.map(([icon, label]) => (
            <div key={label} className="flex h-[26px] items-center gap-[5px] pl-[7px] text-[11px] text-[#444]">
              {icon}
              {label}
            </div>
          ))}
          <div className="flex-1" />
          <div className="flex h-[11px] shrink-0 items-center justify-center gap-[1px] bg-[#e8e8e8]">
            {[0, 1, 2, 3, 4, 5].map(i => <div key={i} className="h-[2px] w-[2px] bg-[#888]" />)}
          </div>
          {bigNav.map(([icon, label, on]) => (
            <div key={label} className={`flex h-[36px] shrink-0 items-center gap-[6px] pl-[11px] pt-px text-[13.9px] ${on ? 'text-[#0072c6]' : 'text-[#444c5c]'}`}>
              {icon}
              {label}
            </div>
          ))}
          <div className="flex h-[35px] shrink-0 items-center gap-[12px] pl-[29px]">
            <Bubble /><Clip check /><GrayCalc /><Clip />
            <div className="ml-[2px]"><ChevDn /></div>
          </div>
        </div>
        <div className="flex min-w-0 flex-1 flex-col pl-[2px] pr-[3px]">
          <div className="flex h-[28px] shrink-0 items-start">
            <div className="mt-[2px] flex h-[27px] w-[125px] items-center gap-[2px] overflow-hidden whitespace-nowrap bg-[#a6a6a6] pl-[13px] pt-[2px] text-white">
              <Pin />
              719: Health Care Tr
            </div>
            <div className="ml-auto pr-[5px] pt-[12px]"><Caret /></div>
          </div>
          {/* frame */}
          <div className="mb-[3px] flex-1 border border-t-2 border-[#b4b4b4] pl-[5px] pr-[4px] pt-[16px]">
            <div className="relative h-[62px] border border-[#d0d0d0] pl-[4px] pr-[5px] pt-[13px]">
              <div className="absolute -top-[9px] left-[8px] flex items-center gap-[5px] bg-white px-[4px] text-[#444]"><Pin />Event</div>
              <div className="flex">
                <div className="flex h-[20px] w-[44px] shrink-0 items-center pt-[2px] text-[#444]">Book #:</div>
                <div className="h-[20px] flex-1 border border-[#a9a9a9] bg-[#f0f0f0]" />
                <div className="flex w-[200px] shrink-0"><Combo bg="bg-[#ffff9e]" add /></div>
              </div>
              <div className="mt-[2px] flex">
                <div className="flex-1" />
                <div className="h-[21px] w-[200px] border border-[#a9a9a9] bg-[#32cd32]" />
              </div>
            </div>
            <div className="mt-[2px] flex h-[26px] items-end">
              <Tab w="w-[100px]" icon={<DetailIco />} label="Event Detail" on center />
              <Tab w="w-[100px]" icon={<Calc s={16} />} />
            </div>
            <div className="h-[455px] border border-[#a9a9a9] px-[2px]">
              <div className="flex h-[28px] items-end">
                <div className="flex h-[26px] w-[130px] items-center gap-[4px] overflow-hidden whitespace-nowrap border border-b-0 border-[#a9a9a9] pl-[6px] text-[#444]"><Building />Booked Locations</div>
              </div>
              <div className="h-[422px] border border-[#a9a9a9] px-[3px]">
                <div className="flex h-[30px] items-center gap-[16px] pl-[8px]">
                  <Page /><Sheet /><Cubes />
                  <div className="h-[20px] w-px bg-[#ccc]" />
                  <Floppy gray />
                </div>
                <div className="h-[387px] border border-[#d8d8d8] p-px">
                  {/* booked locations grid */}
                  <div className="flex h-[175px] flex-col border border-[#a9a9a9]">
                    <div className="flex h-[19px] shrink-0 border-b border-[#a9a9a9] text-[#444]">
                      <div className="w-[18px] border-r border-[#a9a9a9]" />
                      <div className="flex w-[66px] items-center border-r border-[#a9a9a9] pl-[4px] pt-px">Status</div>
                      <div className="flex flex-1 items-center pl-[4px] pt-px"># Co</div>
                      <div className="w-[17px] border-l border-[#a9a9a9]" />
                    </div>
                    <div className="flex h-[125px] shrink-0 border-b border-[#a9a9a9]">
                      <div className="min-w-0 flex-1">
                        {grid1Rows.map((v, i) => (
                          <div key={i} className={`flex h-[21px] ${rowBg[i]}`}>
                            <div className="flex w-[18px] items-center justify-center bg-white">{i === 0 && <svg width="5" height="9"><path d="M0 0l5 4.500L0 9z" fill="#666" /></svg>}</div>
                            <div className="flex w-[66px] items-center border-b border-[#d4d4d4] bg-[#ffff9e] pl-[4px] pt-[2px] text-[#222]">Tentative</div>
                            <div className="flex flex-1 items-center justify-end pr-[2px] pt-[2px] text-[#444]">{v}</div>
                          </div>
                        ))}
                      </div>
                      <Scroll thumb="h-[49px] pt-[4px]" />
                    </div>
                    <div className="flex flex-1 items-center">
                      <div className="ml-[20px] flex h-[24px] w-[63px] items-center justify-end border border-[#a9a9a9] pr-[4px] pt-px text-[#444]">8</div>
                      <div className="flex-1" />
                      <div className="mr-[17px] flex h-[24px] w-[80px] items-center justify-end border border-[#a9a9a9] pr-[2px] pt-px text-[#444]">$51,984.00</div>
                    </div>
                  </div>
                  {/* setup panel */}
                  <div className="ml-[4px] mr-[4px] mt-[18px]">
                    <div className="flex h-[27px] items-end">
                      <Tab w="w-[70px]" icon={<SetupIco />} label="Setup" on center />
                      <Tab w="w-[30px]" icon={<Worker />} />
                    </div>
                    <div className="h-[160px] border border-[#a9a9a9] px-[2px]">
                      <div className="flex h-[29px] items-center gap-[14px] pl-[8px]">
                        <Page /><Cubes />
                        <div className="h-[22px] w-px bg-[#ccc]" />
                        <EditDoc /><Calc s={16} />
                      </div>
                      <div className="h-[127px] border border-[#d8d8d8] p-px">
                        <div className="flex h-[123px] flex-col border border-[#a9a9a9]">
                          <div className="flex h-[32px] shrink-0 border-b border-[#a9a9a9] leading-[13px] text-[#444]">
                            <div className="w-[19px] border-r border-[#a9a9a9]" />
                            <div className="relative flex w-[60px] items-center border-r border-[#a9a9a9] pl-[4px]">
                              <span>Item<br />#</span>
                              <div className="ml-[10px] rotate-180"><Caret /></div>
                            </div>
                            <div className="flex flex-1 items-center pl-[3px]"><span className="w-[18px] overflow-hidden whitespace-nowrap">Final<br />Subtotal</span></div>
                            <div className="w-[17px] border-l border-[#a9a9a9]" />
                          </div>
                          <div className="flex h-[60px] shrink-0 border-b border-[#a9a9a9]">
                            <div className="min-w-0 flex-1 overflow-hidden">
                              {['$1,120.00', '$2,240.00', '$4,825.00'].map((v, i) => (
                                <div key={v} className={`flex h-[21px] ${i === 0 ? 'bg-[#e4f0fb]' : i === 1 ? 'bg-white' : 'bg-[#f0f0f0]'}`}>
                                  <div className="flex w-[19px] items-center justify-center bg-white">{i === 0 && <svg width="5" height="9"><path d="M0 0l5 4.500L0 9z" fill="#666" /></svg>}</div>
                                  <div className={`flex w-[60px] items-center justify-end border-b border-[#d4d4d4] pr-[3px] text-[#444] ${i === 0 ? 'bg-white' : 'bg-[#f0f0f0]'}`}>{i + 1}</div>
                                  <div className="flex w-[40px] items-center bg-[#dda0dd] pl-[3px] text-[#222]">AV</div>
                                  <div className="flex flex-1 items-center justify-end pr-[3px] text-[#444]">{v}</div>
                                </div>
                              ))}
                            </div>
                            <Scroll thumb="h-[17px] pt-px" />
                          </div>
                          <div className="flex flex-1 items-center justify-end">
                            <div className="mr-[17px] flex h-[24px] w-[80px] items-center justify-end border border-[#a9a9a9] pr-[3px] pt-px text-[#444]">$9,614.00</div>
                          </div>
                        </div>
                      </div>
                    </div>
                  </div>
                </div>
              </div>
            </div>
          </div>
        </div>
      </div>
      {/* status bar */}
      <div className="flex h-[23px] shrink-0 items-end justify-end bg-[#0072c6] pb-px pr-px"><Grip /></div>
    </div>
  )
}

export default function App() {
  return (
    <div className="relative h-[785px] w-[1554px] overflow-hidden bg-black pl-[8px] pt-[8px] font-['Roboto',sans-serif] text-[11.2px]">
      <MainWindow />
      <EventWindow />
    </div>
  )
}
